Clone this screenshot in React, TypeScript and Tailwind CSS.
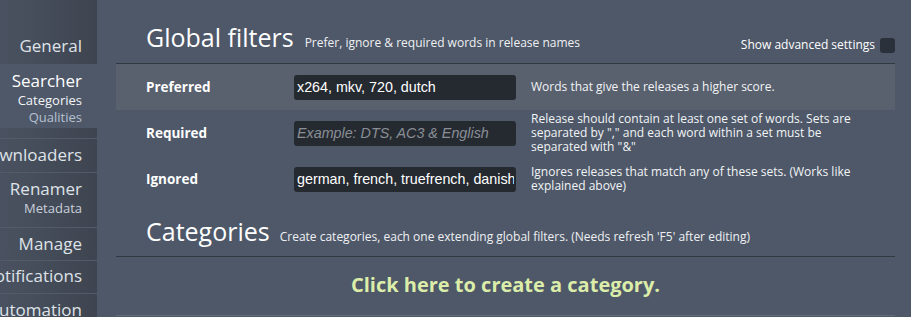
import { ReactNode } from 'react';

const font = { fontFamily: '"Open Sans", "Liberation Sans", sans-serif' };

function NavItem({ children, className = '' }: { children: ReactNode; className?: string }) {
  return (
    <div className={`flex flex-col items-end border-t border-[#535b68] pr-[15px] whitespace-nowrap ${className}`}>
      {children}
    </div>
  );
}

function FilterRow({
  label,
  value,
  placeholder,
  desc,
  highlight,
}: {
  label: string;
  value?: string;
  placeholder?: string;
  desc: ReactNode;
  highlight?: boolean;
}) {
  return (
    <div className={`flex items-center h-[46px] pl-[30px] ${highlight ? 'bg-[#59616f]' : ''}`}>
      <div className="w-[148px] text-[13.5px] font-bold text-white">{label}</div>
      <input
        readOnly
        value={value ?? ''}
        placeholder={placeholder}
        className="w-[222px] h-[25px] rounded-[3px] bg-[#252a31] pl-[3px] pr-[2px] text-[14.3px] text-white placeholder:text-[#8a8f96] placeholder:italic outline-none"
        style={{ fontFamily: '"Liberation Sans", Arial, sans-serif' }}
      />
      <div className="ml-[15px] w-[335px] text-[12px] leading-[14px] text-[#f2f4f6]">{desc}</div>
    </div>
  );
}

export default function App() {
  return (
    <div className="flex w-[911px] h-[317px] overflow-hidden bg-[#4e5868]" style={font}>
      {/* Sidebar */}
      <nav className="w-[97px] shrink-0 bg-gradient-to-r from-[#4a5261] to-[#3e4550] overflow-hidden">
        <div className="h-[64px] pr-[15px] pt-[35px] text-right text-[17px] leading-[22px] text-[#dfe3e8]">General</div>
        <div className="h-[64px] bg-[#4e5868] pr-[15px] text-right">
          <div className="pt-[6px] text-[17px] leading-[22px] text-white">Searcher</div>
          <div className="text-[13px] leading-[17px] text-[#f4f5f7]">Categories</div>
          <div className="text-[13px] leading-[16px] text-[#b6c1d2]">Qualities</div>
        </div>
        <div className="h-[10px]" />
        <NavItem className="h-[34px] pt-[5px] text-[17px] leading-[22px] text-[#dfe3e8]">
          <div>Downloaders</div>
        </NavItem>
        <NavItem className="h-[55px] pt-[5px] text-[#dfe3e8]">
          <div className="text-[17px] leading-[22px]">Renamer</div>
          <div className="text-[13px] leading-[16px] text-[#c9d0da]">Metadata</div>
        </NavItem>
        <NavItem className="h-[33px] pt-[5px] text-[17px] leading-[22px] text-[#dfe3e8]">
          <div>Manage</div>
        </NavItem>
        <NavItem className="h-[33px] pt-[4px] text-[17px] leading-[22px] text-[#dfe3e8]">
          <div>Notifications</div>
        </NavItem>
        <NavItem className="h-[33px] pt-[5px] text-[17px] leading-[22px] text-[#dfe3e8]">
          <div>Automation</div>
        </NavItem>
      </nav>

      {/* Content */}
      <main className="flex-1 pl-[19px] pr-[16px]">
        {/* Global filters */}
        <div className="flex items-baseline h-[64px] pt-[19px] pl-[30px] border-b border-[#323842]">
          <h2 className="text-[25px] leading-[36px] text-white">Global filters</h2>
          <span className="ml-[11px] text-[12px] text-[#eef0f3]">Prefer, ignore &amp; required words in release names</span>
          <label className="ml-auto flex items-center gap-[5px] self-start mt-[17px] text-[12px] text-white">
            Show advanced settings
            <span className="inline-block w-[15px] h-[15px] rounded-[3px] bg-[#2b313a]" />
          </label>
        </div>

        <FilterRow
          highlight
          label="Preferred"
          value="x264, mkv, 720, dutch"
          desc="Words that give the releases a higher score."
        />
        <FilterRow
          label="Required"
          placeholder="Example: DTS, AC3 & English"
          desc={'Release should contain at least one set of words. Sets are separated by "," and each word within a set must be separated with "&"'}
        />
        <FilterRow
          label="Ignored"
          value="german, french, truefrench, danish"
          desc="Ignores releases that match any of these sets. (Works like explained above)"
        />

        {/* Categories */}
        <div className="flex items-baseline h-[55px] pt-[11px] pl-[30px] border-b border-[#323842]">
          <h2 className="text-[25px] leading-[36px] text-white">Categories</h2>
          <span className="ml-[10px] text-[12px] text-[#eef0f3]">
            Create categories, each one extending global filters. (Needs refresh 'F5' after editing)
          </span>
        </div>

        <div className="h-[59px] flex items-center justify-center border-b border-[#636b78]">
          <span className="text-[20px] font-bold text-[#dcedaa] pb-[2px]">Click here to create a category.</span>
        </div>
      </main>
    </div>
  );
}
